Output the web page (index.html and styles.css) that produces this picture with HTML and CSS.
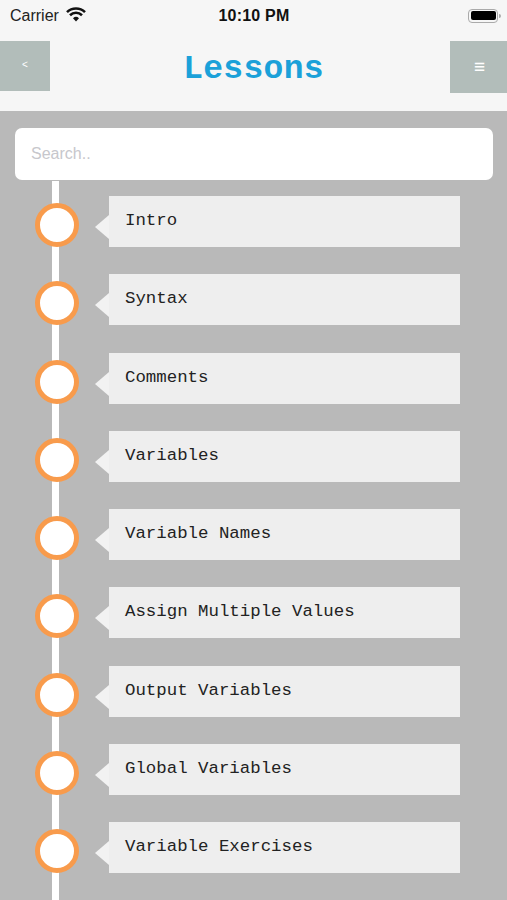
FILE: index.html
```html
<!doctype html>
<html lang="en">
<head>
  <meta charset="utf-8"/>
  <title>Lessons</title>
  <link rel="stylesheet" href="styles.css">
</head>
<body>
<div class="statusbar">
  <div class="carrier">Carrier
    <svg class="wifi" width="20" height="15" viewBox="0 0 20 15">
      <path d="M10 14.5l3-3.2a4.3 4.3 0 0 0-6 0z" fill="#111"/>
      <path d="M4.9 9.2a7.3 7.3 0 0 1 10.2 0l1.8-1.9a10 10 0 0 0-13.8 0z" fill="#111"/>
      <path d="M1.9 6.1a11.6 11.6 0 0 1 16.2 0l1.8-1.9a14.3 14.3 0 0 0-19.8 0z" fill="#111"/>
    </svg>
  </div>
  <div class="clock">10:10 PM</div>
  <div class="battery"><span class="level"></span></div>
</div>

<header class="topbar">
  <button class="nav-btn back">&lt;</button>
  <h1>Lessons</h1>
  <button class="nav-btn menu">&#8801;</button>
</header>

<main class="lessons">
  <input class="search" type="text" placeholder="Search.."/>
  <ul class="timeline">
    <li class="lesson"><span class="dot"></span><div class="card">Intro</div></li>
    <li class="lesson"><span class="dot"></span><div class="card">Syntax</div></li>
    <li class="lesson"><span class="dot"></span><div class="card">Comments</div></li>
    <li class="lesson"><span class="dot"></span><div class="card">Variables</div></li>
    <li class="lesson"><span class="dot"></span><div class="card">Variable Names</div></li>
    <li class="lesson"><span class="dot"></span><div class="card">Assign Multiple Values</div></li>
    <li class="lesson"><span class="dot"></span><div class="card">Output Variables</div></li>
    <li class="lesson"><span class="dot"></span><div class="card">Global Variables</div></li>
    <li class="lesson"><span class="dot"></span><div class="card">Variable Exercises</div></li>
  </ul>
</main>
</body>
</html>
```

FILE: styles.css
```css
:root{
  --bar:#f6f6f6;--btn:#b2bdba;--bg:#b9b9b9;--card:#eeeeee;
  --orange:#f89b4c;--blue:#1ba1d9;
}
*{box-sizing:border-box}
html,body{margin:0;height:900px;overflow:hidden}
body{display:flex;flex-direction:column;font-family:'Liberation Sans',Arial,sans-serif;background:var(--bar)}

/* ------------ status bar ------------ */
.statusbar{height:41px;display:grid;grid-template-columns:1fr auto 1fr;align-items:center;
  padding:0 9px 10px 10px;font-size:16px;color:#222}
.carrier{display:flex;align-items:center;gap:7px}
.wifi{margin-top:-2px}
.clock{font-weight:700;color:#111;letter-spacing:.2px}
.battery{justify-self:end;width:30px;height:14px;border:1.5px solid #aaa;border-radius:4px;
  padding:1.5px;position:relative;margin-right:0}
.battery::after{content:"";position:absolute;right:-4px;top:4px;width:2px;height:4px;
  background:#aaa;border-radius:0 2px 2px 0}
.level{display:block;height:100%;background:#000;border-radius:2px}

/* ------------ header ------------ */
.topbar{height:70px;display:grid;grid-template-columns:57px 1fr 57px;align-items:start}
.nav-btn{border:none;background:var(--btn);color:#fff;padding:0;margin:0;
  font-family:'Liberation Sans',Arial,sans-serif;cursor:pointer}
.back{width:50px;height:50px;font-size:10px;padding-bottom:4px}
.menu{width:57px;height:52px;font-size:19px;padding-left:2px}
h1{margin:0;text-align:center;font-family:'Liberation Mono','Courier New',monospace;
  font-size:33px;font-weight:700;color:var(--blue);line-height:57px;letter-spacing:.3px}

/* ------------ lessons ------------ */
.lessons{flex:1;background:var(--bg);display:flex;flex-direction:column;padding-top:17px}
.search{display:block;margin:0 14px 0 15px;height:52px;border:none;border-radius:7px;
  background:#fff;padding:0 16px;font-family:'Liberation Sans',Arial,sans-serif;font-size:16px;
  outline:none;flex:none}
.search::placeholder{color:#c7c7cc}

.timeline{flex:1;list-style:none;margin:1px 0 0;padding:15px 0 0;position:relative;
  display:flex;flex-direction:column;gap:27.25px}
.timeline::before{content:"";position:absolute;left:52px;top:0;bottom:0;width:7px;background:#fff}
.lesson{display:flex;align-items:flex-start;padding-left:35px}
.dot{position:relative;flex:none;width:44px;height:44px;margin-top:7px;border-radius:50%;
  background:#fff;border:5px solid var(--orange)}
.card{position:relative;margin-left:30px;width:351px;height:51px;background:var(--card);
  display:flex;align-items:center;padding:0 16px 2px;
  font-family:'Liberation Mono','Courier New',monospace;font-size:17.4px;color:#222}
.card::before{content:"";position:absolute;left:-14px;top:19px;border-right:14px solid #f2f2f2;
  border-top:12px solid transparent;border-bottom:12px solid transparent}
```
